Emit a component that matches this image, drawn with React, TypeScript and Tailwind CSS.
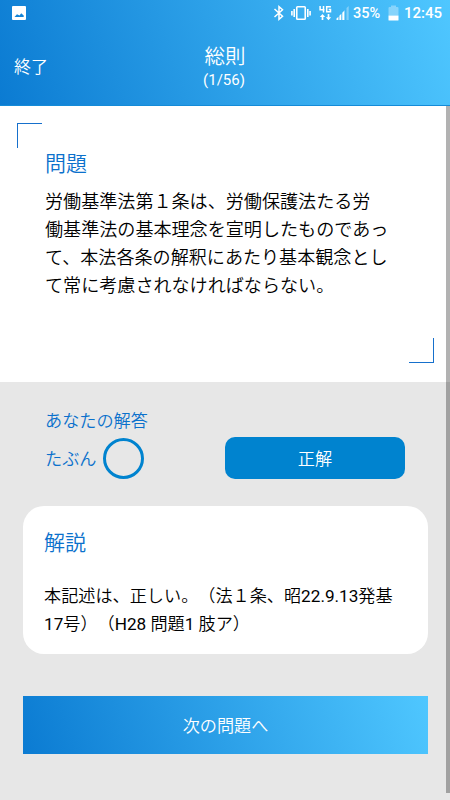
import type { ReactNode } from "react";

function StatusBar() {
  return (
    <div className="flex h-[26px] items-center justify-between pr-[8px] pl-[12px] text-white">
      <svg width="14" height="14" viewBox="0 0 14 14" fill="none">
        <path fillRule="evenodd" fill="#fff" d="M1 0h12Q14 0 14 1v12Q14 14 13 14H1Q0 14 0 13V1Q0 0 1 0ZM2.500 11h9.200V9.600L9.200 7.200L7.500 9.600L5 8.200Z" />
      </svg>
      <div className="flex items-center">
        <svg width="10" height="16" viewBox="0 0 10 16" fill="none" stroke="#fff" strokeWidth="1.500">
          <path d="M0.500 4L8.500 11.300L5 14.300V1.700L8.500 4.700L0.500 12" />
        </svg>
        <svg className="ml-[7px]" width="20" height="16" viewBox="0 0 20 16" fill="none" stroke="#fff" strokeWidth="1.600">
          <rect x="5.750" y="1.750" width="8.500" height="12.500" rx="0.800" />
          <path d="M3.200 4v8M16.800 4v8M0.900 6v4.500M19.100 6v4.500" />
        </svg>
        <svg className="ml-[8px]" width="13" height="16" viewBox="0 0 13 16" fill="none" stroke="#fff" strokeWidth="1.500">
          <path d="M1.100 1V4.800H5.500M4.500 1V7.500M11.900 1.700H7.700V6.800H11.500V4.500H9.700" />
          <path d="M3.500 15V11M9.500 9V13" strokeWidth="1.700" />
          <path d="M0.800 12L3.500 9L6.200 12ZM6.800 12.200L9.500 15.200L12.200 12.200Z" fill="#fff" stroke="none" />
        </svg>
        <svg className="ml-[4px]" width="13" height="16" viewBox="0 0 13 16" fill="#fff">
          <path d="M0.500 15V13.500L2.400 11.700V15ZM3.400 15V10.700L5.300 8.700V15ZM6.300 15V7.700L8.200 5.700V15Z" />
          <path d="M8.200 15V5.700L9 4.900V15ZM10.500 15V3L12.700 1V15Z" opacity=".35" />
        </svg>
        <span className="ml-[4px] w-[28px] pt-px text-[14.500px] leading-[16px] font-medium whitespace-nowrap">35%</span>
        <svg className="ml-[7px]" width="11" height="16" viewBox="0 0 11 16" fill="#fff">
          <path d="M3 0.500h5V2h1.500Q10.500 2 10.500 3v7.500h-10V3Q0.500 2 1.500 2H3Z" opacity=".35" />
          <path d="M0.500 10.500h10V15Q10.500 15.500 10 15.500H1Q0.500 15.500 0.500 15Z" />
        </svg>
        <span className="ml-[5px] w-[38px] text-[15px] leading-[16px] font-medium whitespace-nowrap">12:45</span>
      </div>
    </div>
  );
}

function Line({ children }: { children: ReactNode }) {
  return <span className="block whitespace-nowrap">{children}</span>;
}

function Latin({ children }: { children: ReactNode }) {
  return <span className="font-normal">{children}</span>;
}

export default function App() {
  return (
    <div className="relative flex h-[800px] w-[450px] flex-col overflow-hidden bg-[#e7e7e7] font-['Roboto','Noto_Sans_CJK_JP',sans-serif] font-[350] [text-spacing-trim:space-all]" lang="ja">
      <header className="h-[106px] shrink-0 border-b border-[#148bd8] bg-[linear-gradient(70deg,#0b7bd2,#4fc7ff)] text-white">
        <StatusBar />
        <div className="grid grid-cols-[1fr_100px_1fr]">
          <button className="mt-[28px] ml-[14px] h-[26px] w-fit text-[17px] leading-[26px]">終了</button>
          <div className="mt-[17px] text-center">
            <h1 className="text-[20.500px] leading-[28px]">総則</h1>
            <p className="mt-[-2px] mr-[2px] text-[15px] leading-[22px] font-normal">(1/56)</p>
          </div>
        </div>
      </header>

      <main className="flex flex-1 flex-col">
        <section className="flex h-[276px] flex-col bg-white pt-[17px] pr-[16.500px] pl-[16px]">
          <div className="ml-px h-[25px] w-[25px] border-t border-l border-[#1670cc]" />
          <div className="h-[190px] pt-px pl-[29px]">
            <h2 className="text-[21px] leading-[30px] text-[#0b71cc]">問題</h2>
            <p className="mt-[9px] text-[18.080px] leading-[28px] text-black">
              <Line>労働基準法第１条は、労働保護法たる労</Line>
              <Line>働基準法の基本理念を宣明したものであっ</Line>
              <Line>て、本法各条の解釈にあたり基本観念とし</Line>
              <Line>て常に考慮されなければならない。</Line>
            </p>
          </div>
          <div className="h-[25px] w-[25px] self-end border-r border-b border-[#1670cc]" />
        </section>

        <section className="pr-[22px] pl-[23px]">
          <div className="pt-[26px] pl-[22px] text-[17.150px] leading-[26px] text-[#0b71cc]">
            <p>あなたの解答</p>
            <div className="mt-[3px] flex h-[42px] items-center">
              <span className="w-[58px] pt-[2px]">たぶん</span>
              <span className="h-[41px] w-[41px] rounded-full border-[3px] border-[#0083cf]" />
              <span className="ml-[81px] h-[42px] w-[180px] rounded-[10px] bg-[#0083cf] pt-px text-center leading-[42px] text-white">正解</span>
            </div>
          </div>
          <article className="mt-[27px] h-[148px] rounded-[21px] bg-white pt-[22px] pl-[21px]">
            <h2 className="text-[21px] leading-[30px] text-[#0b71cc]">解説</h2>
            <p className="mt-[24px] text-[17.150px] leading-[28px] text-black">
              <Line>本記述は、正しい。（法１条、昭<Latin>22.9.13</Latin>発基</Line>
              <Line><Latin>17</Latin>号）（<Latin>H28</Latin> 問題<Latin>1</Latin> 肢ア）</Line>
            </p>
          </article>
          <button className="mt-[42px] block h-[58px] w-full bg-[linear-gradient(70deg,#0b7bd2,#4fc7ff)] pt-[3px] text-[17.150px] text-white">次の問題へ</button>
        </section>
      </main>
      <div className="absolute top-[106px] right-0 h-[687px] w-[4px] bg-black/30" />
    </div>
  );
}
